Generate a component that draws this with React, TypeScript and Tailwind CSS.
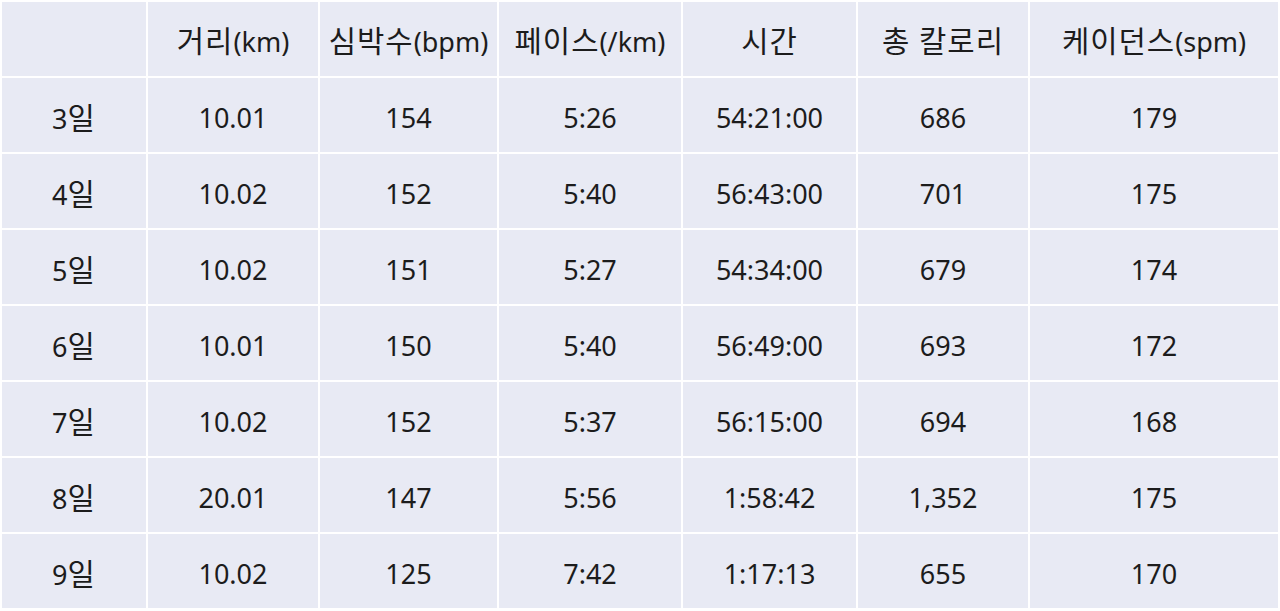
const headers = ['', '거리(km)', '심박수(bpm)', '페이스(/km)', '시간', '총 칼로리', '케이던스(spm)']

const rows = [
  ['3일', '10.01', '154', '5:26', '54:21:00', '686', '179'],
  ['4일', '10.02', '152', '5:40', '56:43:00', '701', '175'],
  ['5일', '10.02', '151', '5:27', '54:34:00', '679', '174'],
  ['6일', '10.01', '150', '5:40', '56:49:00', '693', '172'],
  ['7일', '10.02', '152', '5:37', '56:15:00', '694', '168'],
  ['8일', '20.01', '147', '5:56', '1:58:42', '1,352', '175'],
  ['9일', '10.02', '125', '7:42', '1:17:13', '655', '170'],
]

// hangul runs are drawn a bit larger, like the original font
function Label({ text }: { text: string }) {
  const parts = text.split(/([\uAC00-\uD7A3 ]+)/).filter(Boolean)
  return (
    <span>
      {parts.map((p, i) =>
        /[\uAC00-\uD7A3]/.test(p) ? (
          <span key={i} className="text-[1.1em] tracking-[1px]">{p}</span>
        ) : (
          <span key={i}>{p}</span>
        )
      )}
    </span>
  )
}

export default function App() {
  return (
    <div
      className="min-h-screen bg-white"
      style={{ fontFamily: '"Noto Sans", "Noto Sans CJK KR", sans-serif' }}
    >
      <div className="grid grid-cols-[144px_170px_177px_182px_173px_170px_248px] auto-rows-[74px] gap-[2px] p-[2px] bg-white text-[27px] text-[#1c1c1c]">
        {headers.map((h, i) => (
          <div key={'h' + i} className="flex items-center justify-center bg-[#e8eaf4] pt-1">
            <Label text={h} />
          </div>
        ))}
        {rows.map((row) =>
          row.map((cell, i) => (
            <div key={row[0] + i} className="flex items-center justify-center bg-[#e8eaf4] pt-1.5">
              <Label text={cell} />
            </div>
          ))
        )}
      </div>
    </div>
  )
}
